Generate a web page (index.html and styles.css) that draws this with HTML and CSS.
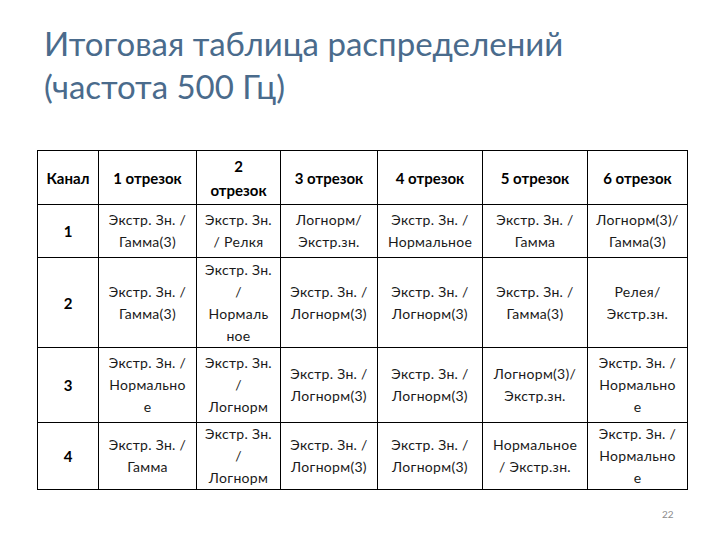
FILE: index.html
```html
<!DOCTYPE html>
<html lang="ru">
<head>
<meta charset="utf-8">
<link rel="stylesheet" href="styles.css">
</head>
<body>
<div class="slide">
  <h1 class="title">Итоговая таблица распределений<br>(частота 500 Гц)</h1>
  <table class="grid">
    <colgroup>
      <col class="c0"><col class="c1"><col class="c2"><col class="c3"><col class="c4"><col class="c5"><col class="c6">
    </colgroup>
    <tr class="head r0">
      <th>Канал</th>
      <th>1 отрезок</th>
      <th>2<br>отрезок</th>
      <th>3 отрезок</th>
      <th>4 отрезок</th>
      <th>5 отрезок</th>
      <th>6 отрезок</th>
    </tr>
    <tr class="r1">
      <th>1</th>
      <td>Экстр. Зн. /<br>Гамма(3)</td>
      <td>Экстр. Зн.<br>/ Релкя</td>
      <td>Логнорм/<br>Экстр.зн.</td>
      <td>Экстр. Зн. /<br>Нормальное</td>
      <td>Экстр. Зн. /<br>Гамма</td>
      <td>Логнорм(3)/<br>Гамма(3)</td>
    </tr>
    <tr class="r2">
      <th>2</th>
      <td>Экстр. Зн. /<br>Гамма(3)</td>
      <td>Экстр. Зн.<br>/<br>Нормаль<br>ное</td>
      <td>Экстр. Зн. /<br>Логнорм(3)</td>
      <td>Экстр. Зн. /<br>Логнорм(3)</td>
      <td>Экстр. Зн. /<br>Гамма(3)</td>
      <td>Релея/<br>Экстр.зн.</td>
    </tr>
    <tr class="r3">
      <th>3</th>
      <td>Экстр. Зн. /<br>Нормально<br>е</td>
      <td>Экстр. Зн.<br>/<br>Логнорм</td>
      <td>Экстр. Зн. /<br>Логнорм(3)</td>
      <td>Экстр. Зн. /<br>Логнорм(3)</td>
      <td>Логнорм(3)/<br>Экстр.зн.</td>
      <td>Экстр. Зн. /<br>Нормально<br>е</td>
    </tr>
    <tr class="r4">
      <th>4</th>
      <td>Экстр. Зн. /<br>Гамма</td>
      <td>Экстр. Зн.<br>/<br>Логнорм</td>
      <td>Экстр. Зн. /<br>Логнорм(3)</td>
      <td>Экстр. Зн. /<br>Логнорм(3)</td>
      <td>Нормальное<br>/ Экстр.зн.</td>
      <td>Экстр. Зн. /<br>Нормально<br>е</td>
    </tr>
  </table>
  <div class="pagenum">22</div>
</div>
</body>
</html>
```

FILE: styles.css
```css
html, body {
  margin: 0;
  padding: 0;
  background: #ffffff;
}
.slide {
  width: 720px;
  height: 540px;
  position: relative;
  font-family: Lato, "Open Sans", "Liberation Sans", sans-serif;
}
.title {
  margin: 0;
  padding: 22px 0 0 44px;
  font-weight: normal;
  font-size: 33px;
  line-height: 43px;
  color: #4a6b8c;
  height: 123px;
  box-sizing: border-box;
}
.grid {
  margin: 27px 0 0 37px;
  border-collapse: collapse;
  table-layout: fixed;
  width: 651px;
  font-size: 14px;
  line-height: 22px;
  color: #1a1a1a;
}
.grid th, .grid td {
  border: 1px solid #000;
  padding: 0;
  text-align: center;
  vertical-align: middle;
  white-space: nowrap;
}
.grid td {
  letter-spacing: 0.3px;
}
.grid th {
  font-weight: bold;
  color: #000;
  font-size: 15px;
}
.c0 { width: 61px; }
.c1 { width: 98px; }
.c2 { width: 84px; }
.c3 { width: 97px; }
.c4 { width: 105px; }
.c5 { width: 105px; }
.c6 { width: 100px; }
.r0 { height: 54px; }
.r0 th { line-height: 24px; }
.r1 { height: 53px; }
.r2 { height: 90px; }
.r3 { height: 75px; }
.r4 { height: 66px; }
.pagenum {
  position: absolute;
  left: 662px;
  top: 508px;
  font-size: 10px;
  color: #8c8c8c;
}
```
